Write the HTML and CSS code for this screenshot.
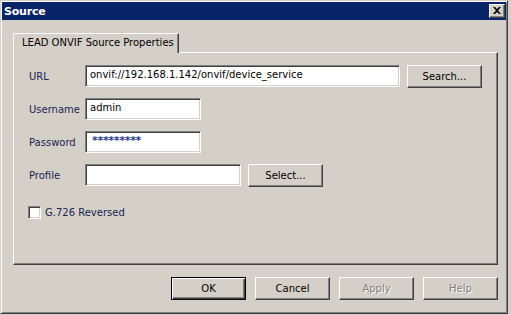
FILE: index.html
```html
<!DOCTYPE html>
<html>
<head>
<meta charset="utf-8">
<link rel="stylesheet" href="styles.css">
</head>
<body>
<div class="window">
  <div class="titlebar">
    <span class="title">Source</span>
    <span class="close"><svg width="8" height="7" viewBox="0 0 8 7"><path d="M0 0h2l2 2 2-2h2L5 3.5 8 7H6L4 5 2 7H0l3-3.5z" fill="#000"/></svg></span>
  </div>
  <div class="content">
    <div class="tabs"><div class="tab">LEAD ONVIF Source Properties</div></div>
    <div class="panel">
      <div class="row">
        <span class="label">URL</span>
        <div class="field f-url">onvif://192.168.1.142/onvif/device_service</div>
        <div class="btn b-side">Search...</div>
      </div>
      <div class="row">
        <span class="label">Username</span>
        <div class="field f-short">admin</div>
      </div>
      <div class="row">
        <span class="label">Password</span>
        <div class="field f-short pw">*********</div>
      </div>
      <div class="row">
        <span class="label">Profile</span>
        <div class="field f-mid"></div>
        <div class="btn b-side">Select...</div>
      </div>
      <div class="check-row">
        <span class="checkbox"></span>
        <span class="label">G.726 Reversed</span>
      </div>
    </div>
    <div class="buttons">
      <div class="btn default">OK</div>
      <div class="btn">Cancel</div>
      <div class="btn disabled">Apply</div>
      <div class="btn disabled">Help</div>
    </div>
  </div>
</div>
</body>
</html>
```
FILE: styles.css
```css
* { box-sizing: border-box; }
html, body { margin: 0; padding: 0; background: #d4d0c8; }
body {
  font-family: "DejaVu Sans", Verdana, sans-serif;
  font-size: 10px;
  width: 511px;
  height: 315px;
  overflow: hidden;
}
.window {
  width: 508px;
  height: 314px;
  background: #d4d0c8;
  border: 1px solid;
  border-color: #d4d0c8 #404040 #404040 #d4d0c8;
  box-shadow: inset 1px 1px 0 #ffffff, inset -1px -1px 0 #808080;
  padding: 1px;
  display: flex;
  flex-direction: column;
}
.titlebar {
  height: 18px;
  background: #0a246a;
  display: flex;
  align-items: center;
  justify-content: space-between;
  padding: 0 1px 0 2px;
}
.title {
  color: #fff;
  font-weight: bold;
  font-size: 11px;
  letter-spacing: -0.2px;
}
.close {
  width: 16px;
  height: 14px;
  background: #d4d0c8;
  border: 1px solid;
  border-color: #fff #404040 #404040 #fff;
  box-shadow: inset -1px -1px 0 #808080;
  display: flex;
  align-items: center;
  justify-content: center;
}
.close svg { display: block; margin-left: -1px; margin-top: -1px; }
.content {
  padding: 13px 8px 0 11px;
  display: flex;
  flex-direction: column;
}
.tabs { display: flex; }
.tab {
  position: relative;
  z-index: 1;
  height: 20px;
  margin-bottom: -1px;
  width: 166px;
  background: #d4d0c8;
  border-top: 1px solid #fff;
  border-left: 1px solid #fff;
  border-right: 1px solid #404040;
  box-shadow: inset -1px 0 0 #808080;
  border-top-left-radius: 2px;
  padding: 3px 0 0 8px;
  color: #000;
  white-space: nowrap;
}
.panel {
  height: 213px;
  border: 1px solid;
  border-color: #fff #404040 #404040 #fff;
  box-shadow: inset -1px -1px 0 #808080;
  padding: 12px 0 0 15px;
  display: flex;
  flex-direction: column;
  gap: 11px;
}
.row {
  display: flex;
  align-items: center;
  height: 22px;
}
.label {
  color: #1a2352;
  width: 56px;
  flex: none;
  white-space: nowrap;
}
.field {
  height: 22px;
  background: #fff;
  border: 1px solid;
  border-color: #808080 #fff #fff #808080;
  box-shadow: inset 1px 1px 0 #404040, inset -1px -1px 0 #d4d0c8;
  padding: 3px 0 0 4px;
  color: #000;
  white-space: nowrap;
  overflow: hidden;
}
.f-url { width: 315px; }
.f-short { width: 116px; }
.f-mid { width: 156px; }
.pw {
  color: #1f3c8f;
  font-size: 11px;
  font-weight: bold;
  padding: 2px 0 0 6px;
  letter-spacing: -0.3px;
}
.btn {
  width: 75px;
  height: 23px;
  background: #d4d0c8;
  border: 1px solid;
  border-color: #fff #404040 #404040 #fff;
  box-shadow: inset -1px -1px 0 #808080;
  display: flex;
  align-items: center;
  justify-content: center;
  color: #000;
  white-space: nowrap;
}
.b-side { margin-left: 7px; }
.btn.default {
  border: 1px solid #000;
  box-shadow: inset 1px 1px 0 #fff, inset -1px -1px 0 #404040, inset -2px -2px 0 #808080;
}
.btn.disabled {
  color: #808080;
  text-shadow: 1px 1px 0 #fff;
}
.check-row {
  display: flex;
  align-items: center;
  gap: 4px;
  margin-top: 9px;
  margin-left: -1px;
}
.checkbox {
  width: 13px;
  height: 13px;
  background: #fff;
  border: 1px solid;
  border-color: #808080 #fff #fff #808080;
  box-shadow: inset 1px 1px 0 #404040, inset -1px -1px 0 #d4d0c8;
}
.buttons {
  display: flex;
  justify-content: flex-end;
  gap: 9px;
  margin-top: 12px;
}
```
